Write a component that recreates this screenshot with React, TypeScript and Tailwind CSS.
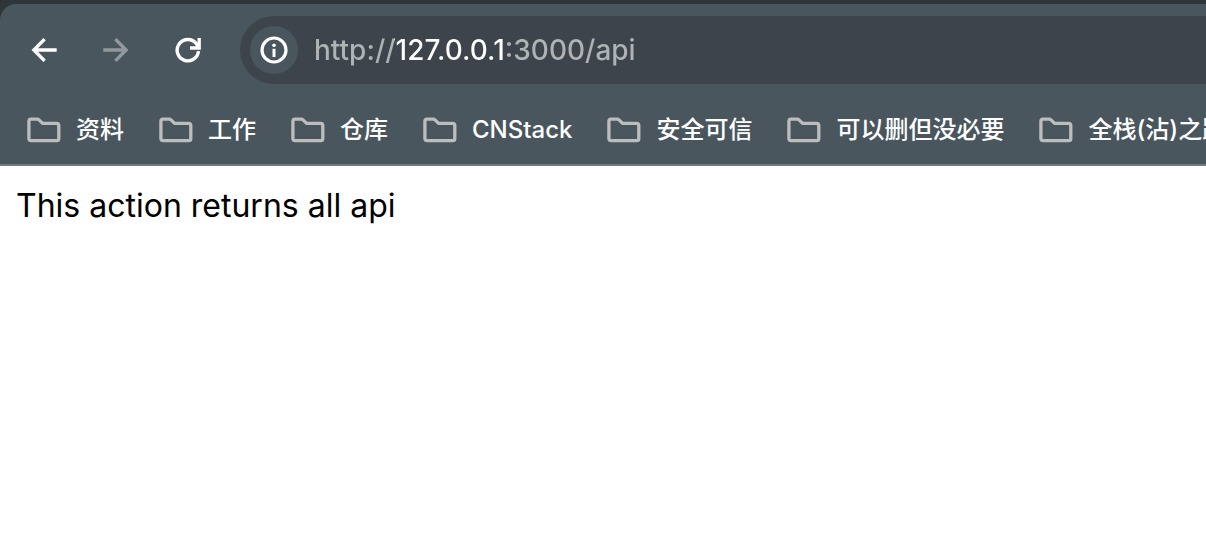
import { useState } from "react";

const bookmarks = ["资料", "工作", "仓库", "CNStack", "安全可信", "可以删但没必要", "全栈(沾)之路"];

function ArrowIcon() {
  return (
    <svg viewBox="0 0 28 28" className="size-7" fill="none" stroke="currentColor" strokeWidth="3.4" aria-hidden="true">
      <path d="M14.6 3.1 3.9 14l10.700 10.900M4.500 14h22.200" strokeLinejoin="miter" />
    </svg>
  );
}

function ReloadIcon() {
  return (
    <svg viewBox="0 0 28 28" className="size-7" fill="none" stroke="currentColor" strokeWidth="3.4" aria-hidden="true">
      <path d="M24.5 15.2A10.7 10.7 0 1 1 22.4 7.7l2 3" />
      <path d="M25.2 2v10H16" strokeWidth="3.3" />
    </svg>
  );
}

function InfoIcon() {
  return (
    <svg viewBox="0 0 28 28" className="size-7" fill="none" aria-hidden="true">
      <circle cx="14" cy="14" r="12" stroke="currentColor" strokeWidth="3.2" />
      <circle cx="14" cy="9.2" r="1.8" fill="currentColor" />
      <path d="M14 12.8V21" stroke="currentColor" strokeWidth="3" />
    </svg>
  );
}

function FolderIcon() {
  return (
    <svg viewBox="0 0 36 28" className="h-7 w-9 shrink-0 text-[#bdbdbd]" fill="none" aria-hidden="true">
      <path
        d="M5 3.2h6.3c.7 0 1.2.2 1.7.7L16.6 7.4h14c1.4 0 2.2.8 2.2 2.2v12.9c0 1.4-.8 2.2-2.2 2.2H5c-1.4 0-2.1-.8-2.1-2.2V5.4C2.900 4 3.600 3.200 5 3.200Z"
        stroke="currentColor"
        strokeWidth="3.3"
        strokeLinejoin="round"
      />
    </svg>
  );
}

export default function App() {
  const [url, setUrl] = useState("http://127.0.0.1:3000/api");

  return (
    <div className="min-h-screen overflow-hidden bg-white font-['Inter','Noto_Sans_CJK_SC',sans-serif]">
      <header className="bg-[#2e363a] pt-1">
        <div className="rounded-tl-2xl border-b-2 border-[#6f7a81] bg-[#49565e]">
          <div className="flex items-center gap-6 py-3 pl-4">
            <nav aria-label="History" className="flex gap-4 text-white">
              <button type="button" aria-label="Back" className="grid size-14 place-items-center rounded-full">
                <ArrowIcon />
              </button>
              <button
                type="button"
                aria-label="Forward"
                disabled
                className="grid size-14 rotate-180 place-items-center rounded-full text-[#92999e]"
              >
                <ArrowIcon />
              </button>
              <button type="button" aria-label="Reload" className="grid size-14 place-items-center rounded-full">
                <ReloadIcon />
              </button>
            </nav>
            <div className="flex h-17 flex-1 items-center gap-4 rounded-l-full bg-[#3d444b] pl-2.5">
              <button
                type="button"
                aria-label="View site information"
                className="grid size-12 shrink-0 place-items-center rounded-full bg-[#49565e] text-white"
              >
                <InfoIcon />
              </button>
              <input
                type="text"
                aria-label="Address"
                value={url}
                onChange={(event) => setUrl(event.target.value)}
                spellCheck={false}
                className="h-12 min-w-0 flex-1 bg-[linear-gradient(90deg,#b0b3b6_80px,#fff_80px,#fff_189px,#b0b3b6_189px)] bg-clip-text text-[28px] font-medium text-transparent caret-white outline-none"
              />
            </div>
          </div>
          <nav aria-label="Bookmarks" className="flex h-17 items-center gap-[34px] overflow-hidden pl-[26px]">
            {bookmarks.map((name) => (
              <a
                key={name}
                href="#"
                className="flex shrink-0 items-center gap-3.5 text-2xl font-medium whitespace-nowrap text-white"
              >
                <FolderIcon />
                {name}
              </a>
            ))}
          </nav>
        </div>
      </header>
      <main className="p-4 text-[32px] leading-12 text-black">This action returns all api</main>
    </div>
  );
}
